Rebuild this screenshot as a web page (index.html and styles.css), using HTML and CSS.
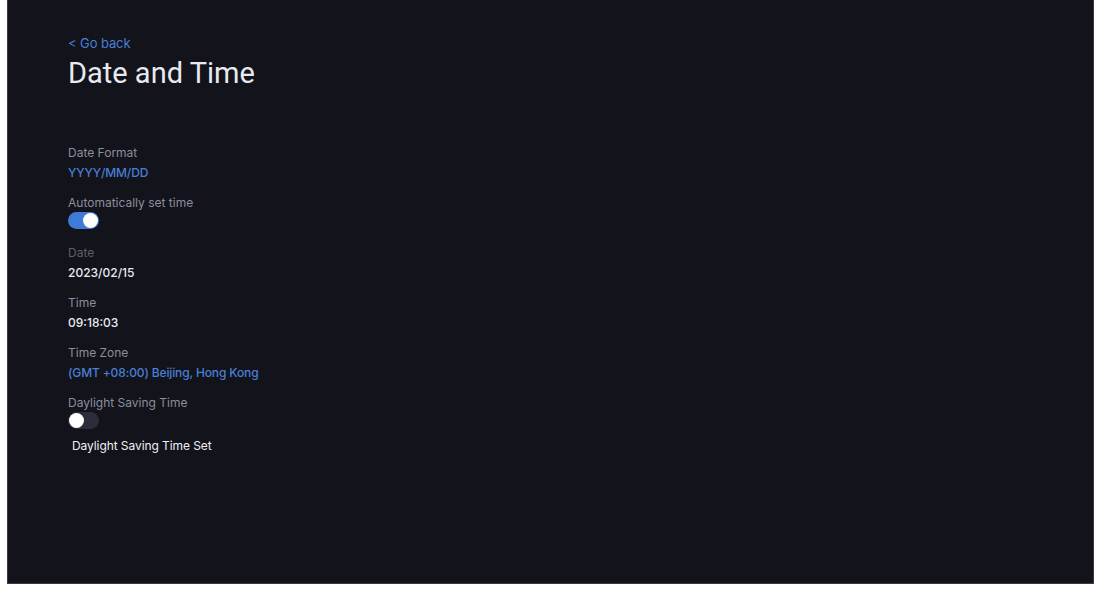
FILE: index.html
```html
<!DOCTYPE html>
<html>
<head>
<meta charset="utf-8">
<link rel="stylesheet" href="styles.css">
</head>
<body>
<div class="screen">
  <a class="back">&lt; Go back</a>
  <h1 class="title">Date and Time</h1>
  <div class="list">
    <div class="item">
      <div class="label">Date Format</div>
      <div class="value link">YYYY/MM/DD</div>
    </div>
    <div class="item">
      <div class="label">Automatically set time</div>
      <div class="toggle on"><span class="knob"></span></div>
    </div>
    <div class="item">
      <div class="label dim">Date</div>
      <div class="value">2023/02/15</div>
    </div>
    <div class="item">
      <div class="label">Time</div>
      <div class="value">09:18:03</div>
    </div>
    <div class="item">
      <div class="label">Time Zone</div>
      <div class="value link">(GMT +08:00) Beijing, Hong Kong</div>
    </div>
    <div class="item">
      <div class="label">Daylight Saving Time</div>
      <div class="toggle"><span class="knob"></span></div>
      <div class="sub">Daylight Saving Time Set</div>
    </div>
  </div>
</div>
</body>
</html>
```

FILE: styles.css
```css
html, body {
  margin: 0;
  padding: 0;
  background: #ffffff;
}
body {
  font-family: Inter, "Noto Sans", sans-serif;
  width: 1100px;
  height: 596px;
  overflow: hidden;
}
.screen {
  margin-left: 7px;
  width: 1087px;
  height: 584px;
  background: #12131b;
  box-sizing: border-box;
  padding: 35px 0 0 60px;
  display: flex;
  flex-direction: column;
  border-right: 1px solid #3a3b42;
  border-bottom: 1px solid #3a3b42;
  border-left: 1px solid #3a3b42;
}
.back {
  color: #4a7fd6;
  font-size: 13px;
  line-height: 16px;
  height: 16px;
  letter-spacing: -0.1px;
}
.title {
  margin: 6px 0 0 0;
  font-family: Roboto, "Noto Sans", sans-serif;
  font-weight: 400;
  font-size: 29px;
  line-height: 32px;
  color: #e8eaf0;
}
.list {
  margin-top: 54px;
  display: flex;
  flex-direction: column;
  gap: 10px;
}
.item {
  display: flex;
  flex-direction: column;
  align-items: flex-start;
}
.label {
  font-size: 12px;
  line-height: 20px;
  color: #8b8e9b;
}
.label.dim {
  color: #5d606e;
}
.value {
  font-size: 12px;
  line-height: 20px;
  font-weight: 500;
  color: #e8eaf0;
}
.value.link {
  color: #4a7fd6;
  font-weight: 500;
  letter-spacing: -0.13px;
}
.toggle {
  width: 31px;
  height: 17px;
  border-radius: 9px;
  background: #2b2e3a;
  margin: -1px 0 4px 0;
  display: flex;
  align-items: center;
  padding: 0 1px;
  box-sizing: border-box;
}
.toggle .knob {
  width: 15px;
  height: 15px;
  border-radius: 50%;
  background: #ffffff;
}
.toggle.on {
  background: #3d7bd6;
  justify-content: flex-end;
}
.sub {
  margin: 5px 0 0 4px;
  font-size: 12px;
  line-height: 16px;
  font-weight: 400;
  color: #eef0f4;
  letter-spacing: -0.08px;
}
```
